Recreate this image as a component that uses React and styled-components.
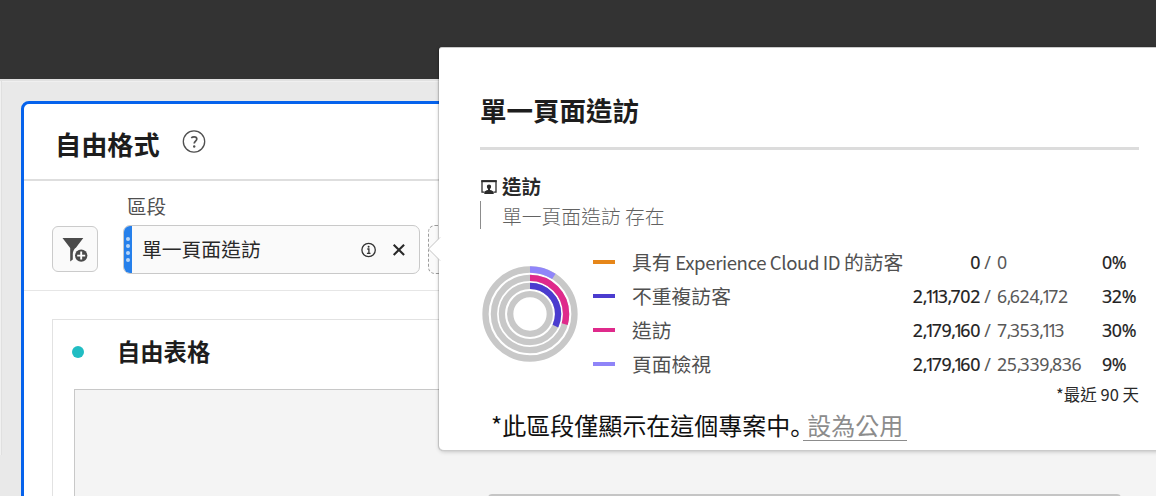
import React from "react";
import styled, { createGlobalStyle } from "styled-components";

const Global = createGlobalStyle`
  *, *::before, *::after { box-sizing: border-box; }
  html, body { margin: 0; overflow: hidden; }
  body {
    background: #e9e9e9;
    color: #1d1d1d;
    font-family: "Noto Sans CJK TC", "Noto Sans", sans-serif;
  }
`;

const Screen = styled.div`
  position: relative;
  width: 1156px;
  height: 496px;
  overflow: hidden;
  display: flex;
  flex-direction: column;
`;

const TopBar = styled.header`
  flex: none;
  height: 79px;
  background: #333;
`;

const Workspace = styled.div`
  flex: 1;
  min-height: 0;
  display: flex;
  border-top: 2px solid #e1e1e1;
  box-shadow: inset 0 1px #f0f0f0;
  padding: 20px 0 0;
`;

const Rail = styled.div`
  flex: none;
  width: 2px;
  height: 374px;
  margin: -20px 19px 0 0;
  background: #f1f1f1;
  border-right: 1px solid #e0e0e0;
`;

const Panel = styled.section`
  flex: none;
  width: 1200px;
  height: 460px;
  background: #fff;
  border: 3px solid #0562ec;
  border-radius: 8px;
`;

const PanelHeader = styled.div`
  display: flex;
  align-items: center;
  gap: 22px;
  height: 77px;
  padding: 0 0 0 31px;
  border-bottom: 2px solid #dedede;
`;

const PanelTitle = styled.h1`
  margin: 4px 0 0;
  font-size: 26.2px;
  line-height: 36px;
  font-weight: 700;
`;

const SegmentArea = styled.div`
  display: flex;
  height: 110px;
  padding: 0 0 0 28px;
  border-bottom: 1px solid #e6e6e6;
`;

const FilterButton = styled.button`
  width: 46px;
  height: 46px;
  margin: 45px 25px 0 0;
  padding: 0 2px 0 0;
  display: grid;
  place-items: center;
  background: #fafafa;
  border: 1px solid #cbcbcb;
  border-radius: 6px;
`;

const SegmentColumn = styled.div`
  padding-top: 10px;
`;

const SegmentLabel = styled.div`
  padding-left: 4px;
  height: 34px;
  font-size: 19.6px;
  line-height: 30px;
  color: #505050;
`;

const Drops = styled.div`
  display: flex;
  gap: 8px;
`;

const Pill = styled.div`
  display: flex;
  align-items: center;
  width: 297px;
  height: 49px;
  background: #fafafa;
  border: 1px solid #c9c9c9;
  border-radius: 7px;
  overflow: hidden;
`;

const Grip = styled.div`
  display: flex;
  flex-direction: column;
  justify-content: center;
  align-items: center;
  gap: 3px;
  width: 8px;
  height: 100%;
  background: #2680eb;
`;

const GripDot = styled.i`
  width: 4px;
  height: 4px;
  border-radius: 50%;
  background: #b7d5f8;
`;

const PillText = styled.span`
  flex: 1;
  padding: 0 0 2px 10px;
  font-size: 19.8px;
  line-height: 30px;
  color: #292929;
`;

const PillIcons = styled.div`
  display: flex;
  align-items: center;
  gap: 15px;
  padding: 0 13px 0 0;
`;

const DropTarget = styled.div`
  width: 200px;
  height: 49px;
  border: 1px dashed #9c9c9c;
  border-radius: 7px;
  background: #fafafa;
`;

const TableCard = styled.div`
  margin: 28px 0 0 28px;
  height: 200px;
  padding-left: 21px;
  border: 1px solid #e2e2e2;
`;

const TableHead = styled.div`
  display: flex;
  align-items: center;
  gap: 33px;
  height: 69px;
`;

const StatusDot = styled.span`
  width: 12px;
  height: 12px;
  margin: -5px 0 0 -2px;
  border-radius: 50%;
  background: #21bdc3;
`;

const TableTitle = styled.h2`
  margin: -7px 0 0;
  font-size: 23.3px;
  line-height: 34px;
  font-weight: 700;
`;

const TableBody = styled.div`
  height: 130px;
  background: #f4f4f4;
  border: 1px solid #c8c8c8;
`;

const Popover = styled.aside`
  position: absolute;
  left: 439px;
  top: 47px;
  width: 730px;
  height: 404px;
  padding: 0 30px 0 42px;
  background: #fff;
  border: solid #cbcbcb;
  border-width: 1px 0;
  border-radius: 3px 0 0 5px;
  box-shadow: -1px 0 1px rgba(0, 0, 0, 0.16), 0 1px 4px rgba(0, 0, 0, 0.18);
`;

const Pointer = styled.svg`
  position: absolute;
  left: -12px;
  top: 188px;
`;

const PopTitle = styled.h2`
  margin: 0 0 0 -1px;
  height: 102px;
  padding-top: 43px;
  font-size: 26.5px;
  line-height: 38px;
  font-weight: 700;
  border-bottom: 3px solid #dcdcdc;
`;

const Container = styled.div`
  display: flex;
  align-items: center;
  gap: 5px;
  height: 26px;
  margin-top: 23px;
  font-size: 19.5px;
  line-height: 26px;
  font-weight: 700;
  color: #292929;
`;

const Condition = styled.div`
  margin: 2px 0 0 -1px;
  height: 28px;
  padding-left: 21px;
  border-left: 1px solid #8c8c8c;
  font-size: 19.8px;
  line-height: 29px;
  font-weight: 300;
  color: #626262;
  white-space: pre;
`;

const Stats = styled.div`
  display: flex;
  height: 137px;
  margin-top: 16px;
`;

const Rings = styled.svg`
  flex: none;
  margin: 20px 14px 0 0;
`;

const Legend = styled.div`
  flex: 1;
`;

const Row = styled.div`
  display: grid;
  grid-template-columns: 39px 250px 98px 17px 105px auto;
  height: 34px;
  line-height: 34px;
  font-size: 19.8px;
  color: #505050;
  white-space: pre;
`;

const Swatch = styled.span`
  align-self: center;
  width: 22px;
  height: 4px;
  background: ${(p) => p.$color};
`;

const Latin = styled.span`
  font-size: 18.6px;
  letter-spacing: -0.4px;
`;

const Figure = styled.span`
  font-family: "Noto Sans", sans-serif;
  font-size: 17.8px;
  letter-spacing: -0.35px;
  text-align: ${(p) => p.$align || "left"};
  color: ${(p) => (p.$strong ? "#222" : "#585858")};
  -webkit-text-stroke: ${(p) => (p.$strong ? "0.2px" : "0")};
`;

const One = styled.span`
  margin-left: -0.7px;
  letter-spacing: -3.4px;
`;

const Comma = styled.span`
  letter-spacing: -1.85px;
`;

const Period = styled.div`
  height: 24px;
  text-align: right;
  font-size: 16.5px;
  line-height: 24px;
  color: #292929;
`;

const Note = styled.p`
  display: flex;
  margin: 2px 0 0 10px;
  font-size: 24px;
  line-height: 34px;
  color: #111;
  white-space: nowrap;
`;

const FullStop = styled.span`
  font-family: "Noto Sans CJK JP", sans-serif;
  font-feature-settings: "halt";
`;

const PublicLink = styled.a`
  height: 33px;
  margin-left: 1px;
  padding: 0 4px;
  border-bottom: 1px solid #8c8c8c;
  color: #8c8c8c;
`;

const NextCard = styled.div`
  position: absolute;
  left: 488px;
  top: 494px;
  width: 633px;
  height: 10px;
  background: #e8e8e8;
  border: 2px solid #c5c5c5;
  border-radius: 4px;
`;

const rows = [
  {
    label: (
      <>
        具有<Latin> Experience Cloud ID </Latin>的訪客
      </>
    ),
    color: "#e68619",
    part: "0",
    total: "0",
    pct: "0%",
  },
  { label: "不重複訪客", color: "#4b3ccf", part: "2,113,702", total: "6,624,172", pct: "32%" },
  { label: "造訪", color: "#df2a8b", part: "2,179,160", total: "7,353,113", pct: "30%" },
  { label: "頁面檢視", color: "#8f84f8", part: "2,179,160", total: "25,339,836", pct: "9%" },
];

const rings = [
  { r: 44.5, share: 0.09, color: "#9085fa" },
  { r: 36.1, share: 0.295, color: "#df2a8b" },
  { r: 28.1, share: 0.32, color: "#4b3ccf" },
  { r: 19.8, share: 0, color: "#e68619" },
];

// Sets narrow characters closer together, as proportional figures do.
function Digits({ value }) {
  return value.split(/([1,])/).map((part, i) => {
    if (part === "1") return <One key={i}>1</One>;
    if (part === ",") return <Comma key={i}>,</Comma>;
    return part;
  });
}

function RingChart() {
  return (
    <Rings width="98" height="98" viewBox="0 0 98 98" fill="none" strokeWidth="6.3">
      {rings.map(({ r, share, color }) => {
        const c = 2 * Math.PI * r;
        return (
          <g key={r} transform="rotate(-90 49 49)">
            <circle cx="49" cy="49" r={r} stroke="#c8c8c8" />
            {share > 0 && (
              <circle cx="49" cy="49" r={r} stroke={color} strokeDasharray={`${c * share} ${c}`} />
            )}
          </g>
        );
      })}
    </Rings>
  );
}

const HelpIcon = () => (
  <svg width="24" height="24" viewBox="0 0 24 24" fill="none" stroke="#505050">
    <circle cx="12" cy="11.5" r="10.7" strokeWidth="1.3" />
    <path d="M9.2 7.9c.8-.7 1.8-1.1 2.9-1.1 1.7 0 2.7.9 2.7 2.2 0 2-2.6 2.3-2.6 4.5" strokeWidth="1.7" />
    <circle cx="12.2" cy="16.5" r="1.2" fill="#505050" stroke="none" />
  </svg>
);

const FilterAddIcon = () => (
  <svg width="28" height="28" viewBox="0 0 28 28">
    <path d="M2.5 3h20.8l-7.2 9.6a8.5 8.5 0 0 0-3.3 7.3v4.6l-2.6 1.9V13.1z" fill="#4b4b4b" />
    <circle cx="21.2" cy="20.6" r="7.4" fill="#fafafa" />
    <circle cx="21.2" cy="20.6" r="6.2" fill="#4b4b4b" />
    <path d="M17.2 20.6h8M21.2 16.6v8" stroke="#fff" strokeWidth="1.9" />
  </svg>
);

const InfoIcon = () => (
  <svg width="16" height="16" viewBox="0 0 16 16" fill="none" stroke="#333">
    <circle cx="7.6" cy="8" r="6.7" strokeWidth="1.3" />
    <path d="M6.3 7h1.6v4.2M5.9 11.3h3.6" strokeWidth="1.3" />
    <circle cx="7.6" cy="4.8" r="1" fill="#333" stroke="none" />
  </svg>
);

const CloseIcon = () => (
  <svg width="14" height="14" viewBox="0 0 14 14" stroke="#292929" strokeWidth="2.1">
    <path d="M1.7 1.7l10.4 10.4M12.1 1.7L1.7 12.1" />
  </svg>
);

const VisitIcon = () => (
  <svg width="16" height="16" viewBox="0 0 16 16">
    <path d="M3.4 14.1H1V3h14v11.1h-2.4" fill="none" stroke="#2c2c2c" strokeWidth="1.3" />
    <path d="M.3 2.2h15.4v2H.3z" fill="#2c2c2c" />
    <path d="M8 6.4c1.4 0 2.1.9 2.1 2.2 0 1-.5 1.9-1.1 2.4v.9c1.8.4 3.7 1.1 3.7 2.6V16H3.3v-1.5c0-1.5 1.9-2.2 3.7-2.6V11c-.6-.5-1.1-1.4-1.1-2.4 0-1.3.7-2.2 2.1-2.2z" fill="#2c2c2c" />
  </svg>
);

export default function App() {
  return (
    <Screen>
      <Global />
      <TopBar />
      <Workspace>
        <Rail />
        <Panel>
          <PanelHeader>
            <PanelTitle>自由格式</PanelTitle>
            <HelpIcon />
          </PanelHeader>
          <SegmentArea>
            <FilterButton aria-label="區段">
              <FilterAddIcon />
            </FilterButton>
            <SegmentColumn>
              <SegmentLabel>區段</SegmentLabel>
              <Drops>
                <Pill>
                  <Grip>
                    <GripDot />
                    <GripDot />
                    <GripDot />
                    <GripDot />
                  </Grip>
                  <PillText>單一頁面造訪</PillText>
                  <PillIcons>
                    <InfoIcon />
                    <CloseIcon />
                  </PillIcons>
                </Pill>
                <DropTarget />
              </Drops>
            </SegmentColumn>
          </SegmentArea>
          <TableCard>
            <TableHead>
              <StatusDot />
              <TableTitle>自由表格</TableTitle>
            </TableHead>
            <TableBody />
          </TableCard>
        </Panel>
      </Workspace>
      <NextCard />
      <Popover>
        <Pointer width="14" height="26" viewBox="0 0 14 26">
          <path d="M13 1.5L1.5 13 13 24.5" fill="#fff" stroke="#c4c4c4" />
          <path d="M12.4 2.5h1.6v21h-1.6z" fill="#fff" />
        </Pointer>
        <PopTitle>單一頁面造訪</PopTitle>
        <Container>
          <VisitIcon />
          造訪
        </Container>
        <Condition>單一頁面造訪 存在</Condition>
        <Stats>
          <RingChart />
          <Legend>
            {rows.map((row) => (
              <Row key={row.color}>
                <Swatch $color={row.color} />
                <span>{row.label}</span>
                <Figure $strong $align="right"><Digits value={row.part} /></Figure>
                <Figure> /</Figure>
                <Figure><Digits value={row.total} /></Figure>
                <Figure $strong>{row.pct}</Figure>
              </Row>
            ))}
          </Legend>
        </Stats>
        <Period>*最近 90 天</Period>
        <Note>
          *此區段僅顯示在這個專案中<FullStop>。</FullStop>
          <PublicLink>設為公用</PublicLink>
        </Note>
      </Popover>
    </Screen>
  );
}
